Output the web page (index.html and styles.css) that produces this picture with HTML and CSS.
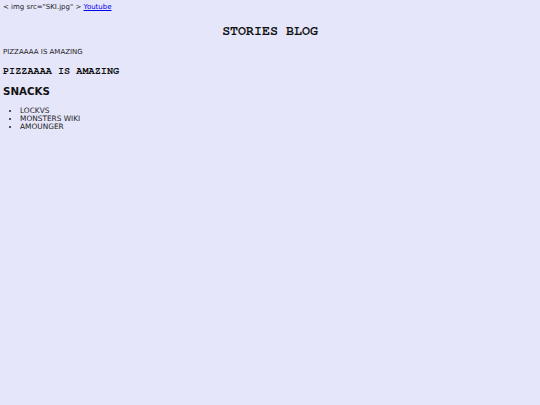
FILE: index.html
```html
<!DOCTYPE html>
<html>
<head>
<meta charset="utf-8">
<link rel="stylesheet" href="styles.css">
</head>
<body>
<div class="top">&lt; img src="SKI.jpg" &gt; <a href="#">Youtube</a></div>
<h1 class="title">STORIES BLOG</h1>
<p class="para">PIZZAAAA IS AMAZING</p>
<h2 class="sub">PIZZAAAA IS AMAZING</h2>
<h1 class="snacks">SNACKS</h1>
<ul class="list">
<li>LOCKVS</li>
<li>MONSTERS WIKI</li>
<li>AMOUNGER</li>
</ul>
</body>
</html>
```
FILE: styles.css
```css
html { background: #e6e6fa; }
body {
  margin: 0;
  padding: 3px 3px;
  font-family: "DejaVu Sans", Verdana, sans-serif;
  font-size: 7px;
  color: #222;
  line-height: 8px;
}
.top { height: 8px; }
.top a { color: #0000ee; text-decoration: underline; }
.title {
  font-family: "Nimbus Mono PS", "FreeMono", "Courier", "Liberation Mono", monospace;
  font-weight: bold;
  font-size: 13.3px;
  line-height: 14px;
  text-align: center;
  margin: 13px 0 0 0;
  color: #111;
}
.para { margin: 10px 0 0 0; }
.sub {
  font-family: "Nimbus Mono PS", "FreeMono", "Courier", "Liberation Mono", monospace;
  font-weight: bold;
  font-size: 10.2px;
  line-height: 12px;
  margin: 9px 0 0 0;
  color: #111;
}
.snacks {
  font-size: 10.3px;
  font-weight: bold;
  line-height: 13px;
  margin: 8px 0 0 0;
  color: #111;
}
.list {
  margin: 9px 0 0 0;
  padding-left: 17px;
  font-size: 7.4px;
}
```
